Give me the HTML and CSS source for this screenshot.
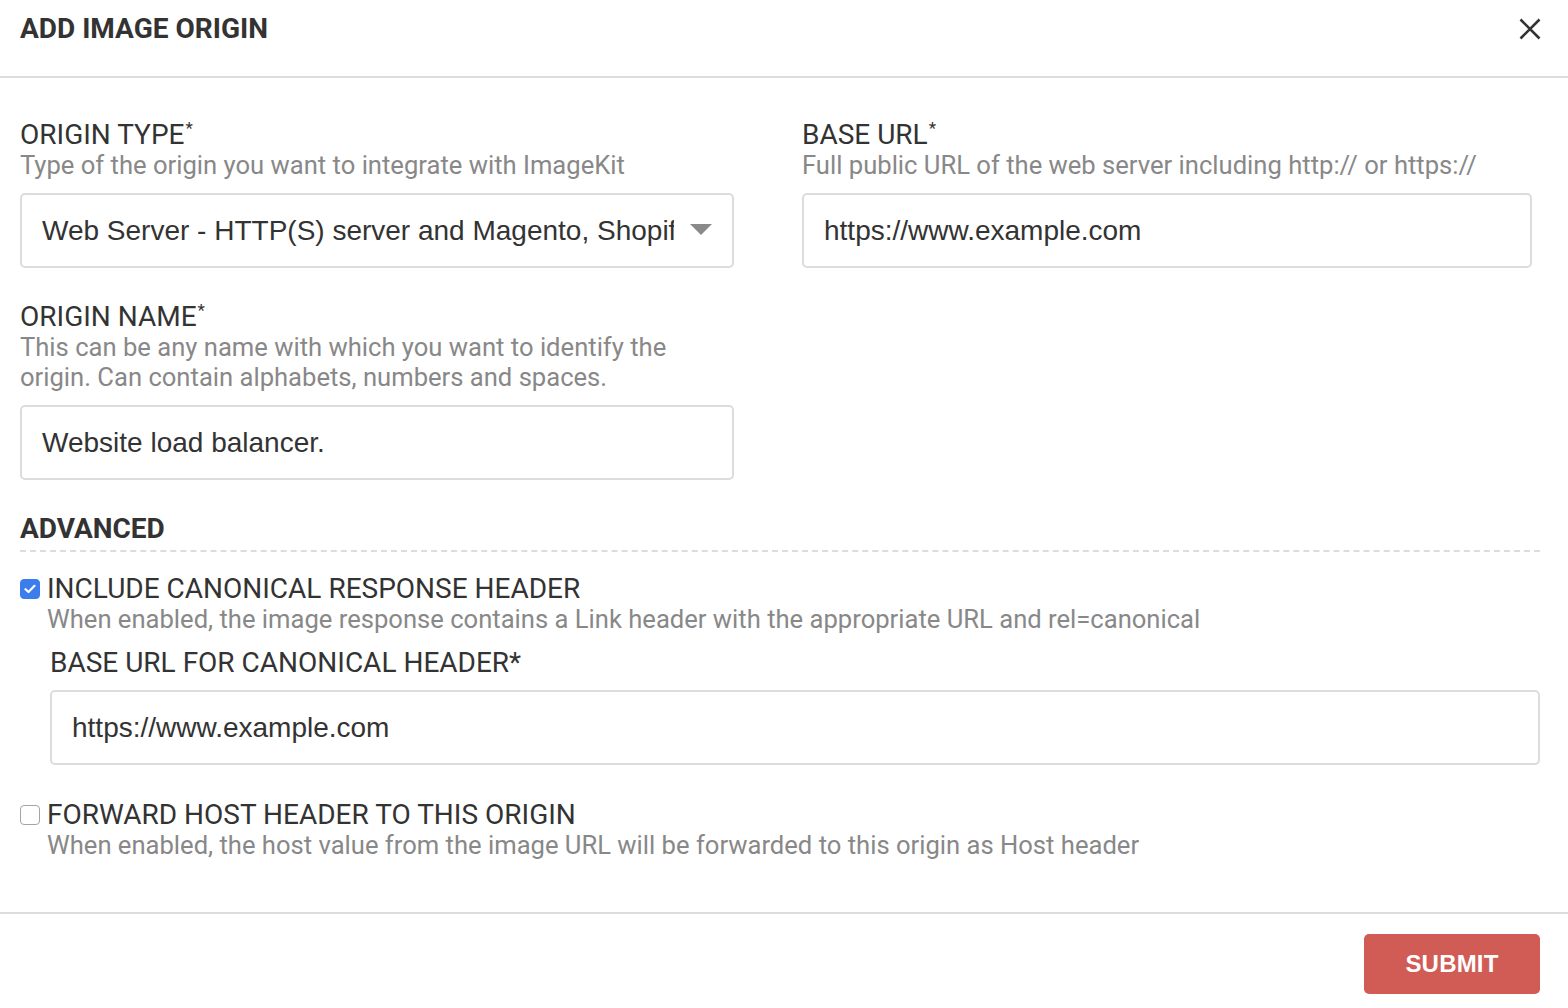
FILE: index.html
```html
<!DOCTYPE html>
<html lang="en">
<head>
<meta charset="utf-8">
<title>Add Image Origin</title>
<link rel="stylesheet" href="styles.css">
</head>
<body>
<div class="modal">
  <div class="modal-header">
    <h1 class="modal-title">ADD IMAGE ORIGIN</h1>
    <button class="close-btn" aria-label="Close">
      <svg width="22" height="22" viewBox="0 0 22 22"><path d="M1.5 1.5 L20.5 20.5 M20.5 1.5 L1.5 20.5" stroke="#333" stroke-width="2.6" fill="none"/></svg>
    </button>
  </div>
  <div class="modal-body">
    <div class="grid">
      <div class="field">
        <div class="label">ORIGIN TYPE<sup>*</sup></div>
        <div class="desc">Type of the origin you want to integrate with ImageKit</div>
        <div class="input select"><span class="value clip">Web Server - HTTP(S) server and Magento, Shopify</span><span class="caret"></span></div>
      </div>
      <div class="field">
        <div class="label">BASE URL<sup>*</sup></div>
        <div class="desc">Full public URL of the web server including http:// or https://</div>
        <div class="input"><span class="value">https://www.example.com</span></div>
      </div>
      <div class="field">
        <div class="label">ORIGIN NAME<sup>*</sup></div>
        <div class="desc">This can be any name with which you want to identify the origin. Can contain alphabets, numbers and spaces.</div>
        <div class="input"><span class="value">Website load balancer.</span></div>
      </div>
    </div>

    <div class="section-title">ADVANCED</div>

    <div class="check-row first">
      <span class="checkbox checked"><svg width="12" height="10" viewBox="0 0 12 10"><path d="M1.5 5.2 L4.5 8 L10.5 1.8" stroke="#fff" stroke-width="2.2" fill="none" stroke-linecap="round" stroke-linejoin="round"/></svg></span>
      <div class="check-text">
        <div class="label">INCLUDE CANONICAL RESPONSE HEADER</div>
        <div class="desc">When enabled, the image response contains a Link header with the appropriate URL and rel=canonical</div>
      </div>
    </div>
    <div class="sub-field">
      <div class="label">BASE URL FOR CANONICAL HEADER*</div>
      <div class="input wide"><span class="value">https://www.example.com</span></div>
    </div>

    <div class="check-row second">
      <span class="checkbox"></span>
      <div class="check-text">
        <div class="label">FORWARD HOST HEADER TO THIS ORIGIN</div>
        <div class="desc">When enabled, the host value from the image URL will be forwarded to this origin as Host header</div>
      </div>
    </div>
  </div>
  <div class="modal-footer">
    <button class="submit-btn">SUBMIT</button>
  </div>
</div>
</body>
</html>
```

FILE: styles.css
```css
* { box-sizing: border-box; }
html, body { margin: 0; padding: 0; background: #fff; }
body {
  font-family: Roboto, "Liberation Sans", Arial, sans-serif;
  color: #333;
  width: 1568px;
  height: 1008px;
  overflow: hidden;
}

.modal-header {
  height: 78px;
  border-bottom: 2px solid #dcdcdc;
  display: flex;
  justify-content: space-between;
  align-items: flex-start;
  padding: 13px 28px 0 20px;
}
.modal-title {
  margin: 0;
  font-size: 28px;
  line-height: 32px;
  font-weight: 700;
  color: #333;
}
.close-btn {
  border: 0;
  background: none;
  padding: 0;
  margin-top: 5px;
  width: 22px;
  height: 22px;
  margin-right: -1px;
}
.close-btn svg { display: block; }

.modal-body {
  padding: 42px 28px 52px 20px;
}

.grid {
  display: grid;
  grid-template-columns: 714px 730px;
  column-gap: 68px;
  row-gap: 34px;
}

.label {
  font-size: 28px;
  line-height: 30px;
  color: #333;
  font-weight: 400;
}
.label sup {
  font-size: 17px;
  line-height: 0;
  vertical-align: 0;
  position: relative;
  top: -10px;
  margin-left: 1px;
}
.desc {
  font-size: 25.6px;
  line-height: 30px;
  color: #888;
}

.input {
  margin-top: 13px;
  height: 75px;
  border: 2px solid #dcdcdc;
  border-radius: 5px;
  display: flex;
  align-items: center;
  padding: 0 20px;
  font-family: "Liberation Sans", Arial, sans-serif;
  font-size: 28px;
  color: #333;
}
.input .value { white-space: nowrap; }
.select { padding-right: 20px; }
.select .clip {
  overflow: hidden;
  width: 632px;
  flex: none;
}
.caret {
  margin-left: auto;
  width: 0;
  height: 0;
  border-left: 11px solid transparent;
  border-right: 11px solid transparent;
  border-top: 11px solid #8a8a8a;
  margin-top: -3px;
}

.section-title {
  margin-top: 34px;
  font-size: 28px;
  line-height: 30px;
  font-weight: 700;
  color: #333;
  padding-bottom: 6px;
  border-bottom: 2px dashed #dcdcdc;
}

.check-row {
  display: flex;
  align-items: flex-start;
}
.check-row.first { margin-top: 22px; }
.check-row.second { margin-top: 35px; }
.checkbox {
  flex: none;
  width: 20px;
  height: 20px;
  border-radius: 4px;
  border: 1px solid #a4a4a4;
  background: #fff;
  margin-top: 5px;
  margin-right: 7px;
  display: flex;
  align-items: center;
  justify-content: center;
}
.checkbox.checked {
  background: #3b7ded;
  border-color: #3b7ded;
}

.sub-field {
  margin-top: 14px;
  margin-left: 30px;
}
.sub-field .input { margin-top: 12px; }

.modal-footer {
  border-top: 2px solid #dcdcdc;
  display: flex;
  justify-content: flex-end;
  padding: 20px 28px 0 20px;
}
.submit-btn {
  width: 176px;
  height: 60px;
  border: 0;
  border-radius: 5px;
  background: #d05c55;
  color: #fff;
  font-family: "Liberation Sans", Arial, sans-serif;
  font-weight: 700;
  font-size: 24px;
  letter-spacing: 0.2px;
}
```
